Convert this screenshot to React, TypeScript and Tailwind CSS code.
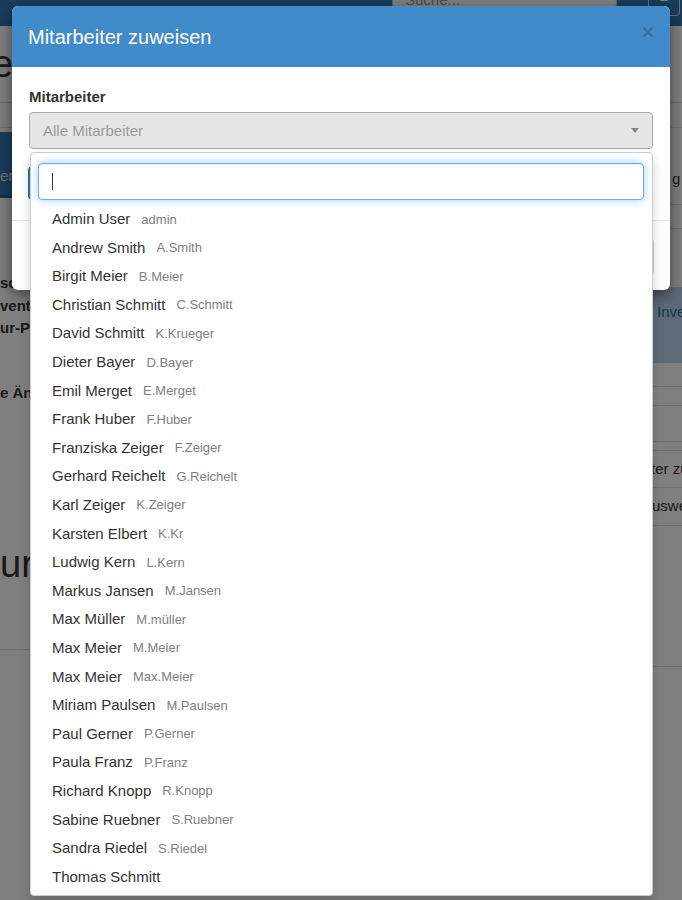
import React from 'react'

const users: [string, string][] = [
  ['Admin User', 'admin'],
  ['Andrew Smith', 'A.Smith'],
  ['Birgit Meier', 'B.Meier'],
  ['Christian Schmitt', 'C.Schmitt'],
  ['David Schmitt', 'K.Krueger'],
  ['Dieter Bayer', 'D.Bayer'],
  ['Emil Merget', 'E.Merget'],
  ['Frank Huber', 'F.Huber'],
  ['Franziska Zeiger', 'F.Zeiger'],
  ['Gerhard Reichelt', 'G.Reichelt'],
  ['Karl Zeiger', 'K.Zeiger'],
  ['Karsten Elbert', 'K.Kr'],
  ['Ludwig Kern', 'L.Kern'],
  ['Markus Jansen', 'M.Jansen'],
  ['Max Müller', 'M.müller'],
  ['Max Meier', 'M.Meier'],
  ['Max Meier', 'Max.Meier'],
  ['Miriam Paulsen', 'M.Paulsen'],
  ['Paul Gerner', 'P.Gerner'],
  ['Paula Franz', 'P.Franz'],
  ['Richard Knopp', 'R.Knopp'],
  ['Sabine Ruebner', 'S.Ruebner'],
  ['Sandra Riedel', 'S.Riedel'],
  ['Thomas Schmitt', ''],
]

// page that sits behind the modal backdrop
const BackPage = () => (
  <div className="w-full">
    <nav className="flex h-[26px] items-start justify-end bg-[#337ab7] pr-[2px]">
      <div className="mt-[-22px] flex h-[30px] w-[225px] items-end rounded-[4px] border border-[#ccc] bg-white pl-[12px] text-[15px] leading-[15px] text-[#999]">
        Suche...
      </div>
      <div className="ml-[31px] mt-[-18px] flex h-[34px] w-[32px] items-end justify-center rounded-[4px] border border-[#e6e6e6] pb-[14px]">
        <div className="h-[6px] w-[8px] rounded-[1px] bg-white" />
      </div>
    </nav>
    <div className="flex h-[77px] items-center border-b border-[#ddd]">
      <h1 className="ml-[-8px] whitespace-nowrap text-[38px] leading-none">eingang</h1>
    </div>
    <div className="h-[25px] border-b border-[#ddd]" />
    <div className="grid grid-cols-2">
      <div className="flex flex-col">
        <div className="mt-[4px] flex h-[66px] w-[260px] items-end border-b-[3px] border-[#2a6496] bg-[#337ab7] pb-[12px] text-[15px] leading-[15px] text-[#d6e6f4]">
          erfassen
        </div>
        <div className="mt-[74px] flex flex-col text-[15px] font-bold leading-[22.5px] whitespace-nowrap">
          <span>schung</span>
          <span>ventur</span>
          <span>ur-Personal</span>
          <span className="mt-[42px]">e Änderungen</span>
        </div>
        <div className="mt-[138px] whitespace-nowrap text-[38px] leading-[44px]">ur-Liste</div>
        <div className="mt-[63px] border-t border-[#ddd]" />
      </div>
      <div className="flex flex-col">
        <div className="flex h-[76px] items-end justify-end">
          <span className="mb-[14px] w-[12px] overflow-hidden pl-[2px] text-[15px]">g</span>
        </div>
        <div className="h-[25px] border-y border-[#ddd]" />
        <div className="mt-[58px] flex h-[76px] justify-end bg-[#b9d7ee] pt-[14px]">
          <span className="w-[25px] overflow-hidden whitespace-nowrap text-[15px] leading-[22px] text-[#31708f]">
            Inventar
          </span>
        </div>
        <div className="mt-[23px] h-[20px] border-y border-[#ddd]" />
        <div className="h-[36px] border-b border-[#ddd]" />
        <div className="mt-[8px] flex h-[38px] items-center justify-end border-y border-[#ddd]">
          <span className="w-[31px] overflow-hidden whitespace-nowrap text-[15px]">ter zuweisen</span>
        </div>
        <div className="flex h-[38px] items-center justify-end border-b border-[#ddd]">
          <span className="w-[30px] overflow-hidden whitespace-nowrap text-[15px]">uswerten</span>
        </div>
        <div className="mt-[140px] border-t border-[#ddd]" />
      </div>
    </div>
  </div>
)

const UserOption = ({ name, login }: { name: string; login: string }) => (
  <li className="flex h-[28.6px] items-center gap-[11px] pl-[21px] whitespace-nowrap">
    <span className="text-[15px] text-[#333]">{name}</span>
    {login && <span className="text-[13px] text-[#808080]">{login}</span>}
  </li>
)

export default function App() {
  return (
    <div className="relative h-[900px] w-[682px] overflow-hidden bg-white font-['Liberation_Sans',Arial,sans-serif] text-[#333]">
      <BackPage />

      {/* backdrop */}
      <div className="absolute inset-0 bg-black/50" />

      {/* modal */}
      <div className="absolute left-[12px] top-[6px] w-[658px] overflow-hidden rounded-[6px] bg-white shadow-[0_5px_15px_rgba(0,0,0,0.5)]">
        <div className="flex h-[61px] items-center justify-between bg-[#428bca] px-[16px]">
          <h4 className="text-[20px] leading-[24px] text-white">Mitarbeiter zuweisen</h4>
          <span className="mb-[11px] text-[21px] font-bold leading-none text-black/20">×</span>
        </div>
        <div className="px-[17px] pb-[20px] pt-[19px]">
          <label className="mb-[5px] block text-[15px] font-bold leading-[21px] text-[#333]">Mitarbeiter</label>
          <div className="flex h-[37px] items-center justify-between rounded-[4px] border border-[#aaa] bg-[#e6e6e6] pl-[13px] pr-[13px]">
            <span className="pt-[1px] text-[15px] text-[#999]">Alle Mitarbeiter</span>
            <span className="h-0 w-0 border-x-[4px] border-t-[5px] border-x-transparent border-t-[#888]" />
          </div>
          <div className="ml-[-1px] mt-[17px] h-[34px] w-[200px] rounded-[4px] border border-[#2e6da4] bg-[#337ab7]" />
        </div>
        <div className="flex h-[70px] items-start justify-end border-t border-[#e5e5e5] px-[16px] pt-[17px]">
          <div className="h-[37px] w-[110px] rounded-[4px] border border-[#ccc] bg-white" />
        </div>
      </div>

      {/* select dropdown */}
      <div className="absolute left-[30px] top-[152px] h-[744px] w-[623px] rounded-[4px] border border-[#ccc] bg-white shadow-[0_6px_12px_rgba(0,0,0,0.175)]">
        <div className="pl-[7px] pr-[8px] pt-[10px]">
          <div className="flex h-[37px] items-center rounded-[4px] border border-[#66afe9] bg-white pl-[13px] shadow-[inset_0_1px_1px_rgba(0,0,0,0.075),0_0_8px_rgba(102,175,233,0.6)]">
            <span className="h-[17px] w-px bg-[#333]" />
          </div>
        </div>
        <ul className="mt-[5px]">
          {users.map(([name, login], i) => (
            <UserOption key={i} name={name} login={login} />
          ))}
        </ul>
      </div>
    </div>
  )
}
